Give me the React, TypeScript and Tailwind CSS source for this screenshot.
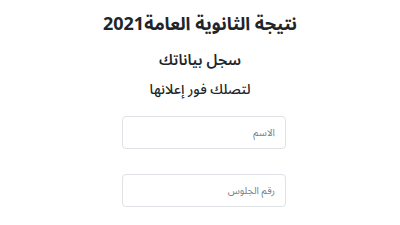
export default function App() {
  return (
    <div dir="rtl" className="min-h-[225px] bg-white flex flex-col items-center text-[#212529] font-['Noto_Sans_Arabic','DejaVu_Sans',sans-serif]">
      <h1 className="mt-[10px] text-[18px] font-bold leading-[28px]">نتيجة الثانوية العامة2021</h1>
      <h2 className="mt-[9px] text-[15px] font-semibold leading-[26px]">سجل بياناتك</h2>
      <h3 className="mt-[4px] text-[14px] font-medium leading-[26px]">لتصلك فور إعلانها</h3>
      <form className="mt-[13px] flex flex-col gap-[25px] ml-[8px]">
        <input
          type="text"
          placeholder="الاسم"
          className="w-[164px] h-[33px] rounded-[4px] border border-[#dee2e6] px-[10px] text-[10px] placeholder:text-[#7a7f85] outline-none"
        />
        <input
          type="text"
          placeholder="رقم الجلوس"
          className="w-[164px] h-[33px] rounded-[4px] border border-[#dee2e6] px-[10px] text-[10px] placeholder:text-[#7a7f85] outline-none"
        />
      </form>
    </div>
  );
}
